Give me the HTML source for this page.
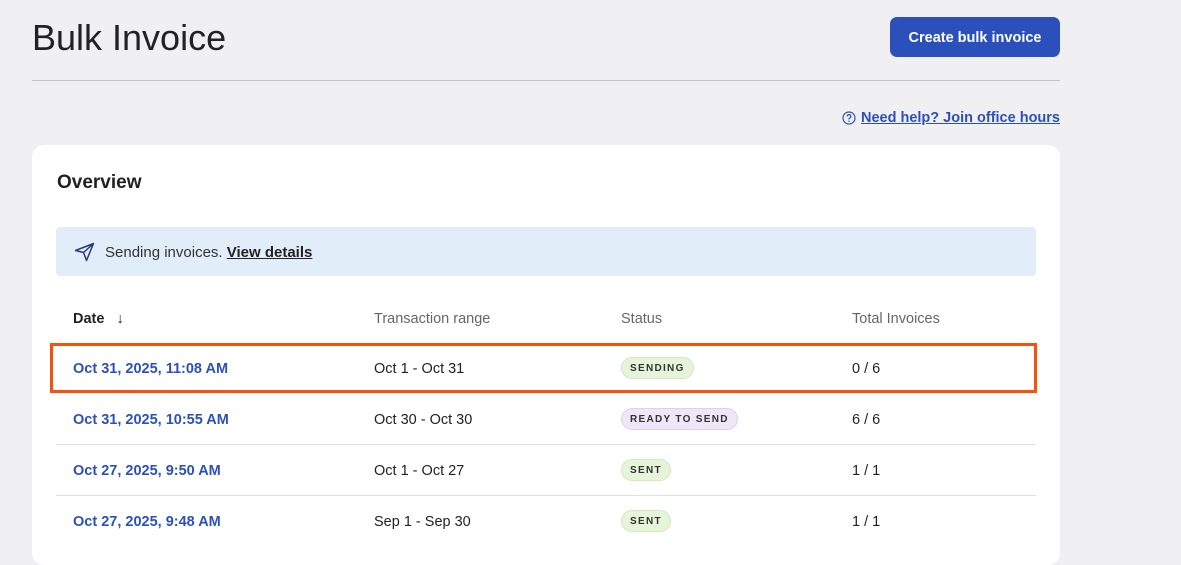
<!DOCTYPE html>
<html><head><style>
*{margin:0;padding:0;box-sizing:border-box}
body{width:1181px;height:546px;overflow:hidden;background:#f0f0f2;font-family:"Liberation Sans",sans-serif;color:#222;position:relative}
.abs{position:absolute}
h1{position:absolute;left:32px;top:17px;font-size:36px;font-weight:400;color:#222;letter-spacing:0px}
.btn{left:890px;top:17px;width:170px;height:40px;background:#2b50bb;border-radius:7px;color:#fff;font-weight:700;font-size:14.5px;display:flex;align-items:center;justify-content:center;padding-top:2px}
.hr{left:32px;top:80px;width:1028px;height:1px;background:#c4c4c4}
.help{right:121px;top:110px;font-size:14.5px;font-weight:700;color:#2b50bb;display:flex;align-items:center;gap:5px}
.help u{text-decoration:underline}
.card{left:32px;top:145px;width:1028px;height:420px;background:#fff;border-radius:12px}
.ov{left:57px;top:172px;font-size:19px;font-weight:700;color:#222}
.banner{left:56px;top:227px;width:980px;height:49px;background:#e1edf9;border-radius:4px;font-size:15px;color:#333}
.th{top:311px;font-size:14.5px;color:#666}
.td{font-size:14.5px;color:#222}
.dt{font-weight:700;color:#2b50bb}
.sep{left:56px;width:980px;height:1px;background:#e0e0e0}
.pill{font-size:10px;font-weight:700;letter-spacing:1.3px;color:#333;border-radius:11px;height:22px;padding:0 8px;display:flex;align-items:center}
.g{background:#e6f4d9;border:1px solid #d2e8bf}
.p{background:#efe6f8;border:1px solid #dcd0ec}
</style></head><body>
<h1>Bulk Invoice</h1>
<div class="abs btn">Create bulk invoice</div>
<div class="abs hr"></div>
<div class="abs help"><svg width="14" height="14" viewBox="0 0 14 14"><circle cx="7" cy="7" r="6" fill="none" stroke="#2b50bb" stroke-width="1.2"/><path d="M5.2 5.4a1.8 1.8 0 1 1 2.4 1.7c-.5.2-.6.5-.6 1v.4" fill="none" stroke="#2b50bb" stroke-width="1.2"/><circle cx="7" cy="10.2" r=".7" fill="#2b50bb"/></svg><u>Need help? Join office hours</u></div>
<div class="abs card"></div>
<div class="abs ov">Overview</div>
<div class="abs banner">
<svg class="abs" style="left:18px;top:15px" width="21" height="20" viewBox="0 0 21 20"><path d="M1.5 8.5L19.5 1.5L12.5 18.5L9.5 10.5Z M9.5 10.5L19.5 1.5" fill="none" stroke="#2a3a7a" stroke-width="1.5" stroke-linejoin="round"/></svg>
<span class="abs" style="left:49px;top:17px">Sending invoices. <b style="text-decoration:underline;color:#222">View details</b></span>
</div>
<div class="abs th" style="left:73px;color:#222;font-weight:700">Date &nbsp;&nbsp;<span style="font-weight:400">↓</span></div>
<div class="abs th" style="left:374px">Transaction range</div>
<div class="abs th" style="left:621px">Status</div>
<div class="abs th" style="left:852px">Total Invoices</div>

<div class="abs" style="left:50px;top:343px;width:987px;height:50px;border:3px solid #f5520e"></div>
<div class="abs td dt" style="left:73px;top:361px">Oct 31, 2025, 11:08 AM</div>
<div class="abs td" style="left:374px;top:361px">Oct 1 - Oct 31</div>
<div class="abs pill g" style="left:621px;top:357px">SENDING</div>
<div class="abs td" style="left:852px;top:361px">0 / 6</div>

<div class="abs td dt" style="left:73px;top:412px">Oct 31, 2025, 10:55 AM</div>
<div class="abs td" style="left:374px;top:412px">Oct 30 - Oct 30</div>
<div class="abs pill p" style="left:621px;top:408px">READY TO SEND</div>
<div class="abs td" style="left:852px;top:412px">6 / 6</div>
<div class="abs sep" style="top:444px"></div>

<div class="abs td dt" style="left:73px;top:463px">Oct 27, 2025, 9:50 AM</div>
<div class="abs td" style="left:374px;top:463px">Oct 1 - Oct 27</div>
<div class="abs pill g" style="left:621px;top:459px">SENT</div>
<div class="abs td" style="left:852px;top:463px">1 / 1</div>
<div class="abs sep" style="top:495px"></div>

<div class="abs td dt" style="left:73px;top:514px">Oct 27, 2025, 9:48 AM</div>
<div class="abs td" style="left:374px;top:514px">Sep 1 - Sep 30</div>
<div class="abs pill g" style="left:621px;top:510px">SENT</div>
<div class="abs td" style="left:852px;top:514px">1 / 1</div>
</body></html>
